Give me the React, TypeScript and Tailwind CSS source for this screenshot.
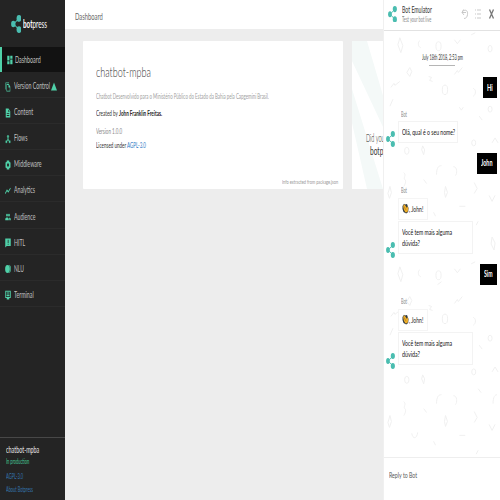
import { useLayoutEffect, useRef, useState } from "react";
import type { ReactNode } from "react";

/* Text condensed (or widened) horizontally to a fixed advance width. */
function Fit({ w, className = "", children }: { w: number; className?: string; children: ReactNode }) {
  const ref = useRef<HTMLSpanElement>(null);
  const [scale, setScale] = useState(1);
  useLayoutEffect(() => {
    if (ref.current) setScale(w / ref.current.offsetWidth);
  }, [w]);
  return (
    <span className="flex shrink-0 whitespace-nowrap" style={{ width: w }}>
      <span ref={ref} className={`block shrink-0 origin-left ${className}`} style={{ transform: `scaleX(${scale})` }}>
        {children}
      </span>
    </span>
  );
}

function Logo({ className }: { className: string }) {
  return (
    <svg className={className} viewBox="0 0 10 18" preserveAspectRatio="none">
      <path d="M7.5 3.5 2.5 9 7.5 14.5" fill="none" stroke="#4abdb0" strokeWidth="1" />
      <ellipse cx="7.6" cy="3.4" rx="2.3" ry="3.4" fill="#4abdb0" />
      <ellipse cx="2.2" cy="9" rx="2.100" ry="3.300" fill="#4abdb0" />
      <ellipse cx="7.6" cy="14.6" rx="2.3" ry="3.4" fill="#4abdb0" />
    </svg>
  );
}

const icons: Record<string, ReactNode> = {
  dashboard: <path d="M1 2h9V13H1zM1 22h9v-7H1zM13 22h9V11h-9zM13 2v7h9V2z" />,
  copy: <path d="M16 1H2v17h2V3h12zM15 5H6v18h15V11zM8 21V7h6v6h5v8z" />,
  content: <path d="M14 1H3v22h18V8zM17 19H7v-2h10zM17 14H7v-2h10zM13 9V3.500L18.500 9z" />,
  flows: <path d="M17 16l-4-4V8.800a3 3 0 1 0-2 0V12l-4 4H3v5h5v-3l4-4.200 4 4.200v3h5v-5z" stroke="currentColor" />,
  middleware: <path fillRule="evenodd" d="M7 1h10v3l5 2v12l-5 2v3H7v-3l-5-2V6l5-2zM12 8a4 4 0 1 0 0 8 4 4 0 0 0 0-8z" />,
  analytics: <path d="M1 18l7-8 5 4 9-9" fill="none" stroke="currentColor" strokeWidth="3" />,
  audience: <path d="M8 11a3.500 3.500 0 1 0 0-7 3.500 3.500 0 0 0 0 7zM16 11a3.500 3.500 0 1 0 0-7 3.500 3.500 0 0 0 0 7zM1 20v-3c0-5 14-5 14 0v3zM17 20v-3c0-1-.5-2-1.500-3 3-.5 7.500.5 7.500 3v3z" />,
  hitl: <path fillRule="evenodd" d="M1 1h22v18H7l-6 4zM11 4v8h3V4zM11 14v2h3v-2z" />,
  nlu: (
    <>
      <circle cx="10" cy="12" r="9.500" />
      <path d="M18 3c6 4 6 14 0 18" fill="none" stroke="currentColor" strokeWidth="2.500" />
    </>
  ),
  terminal: <path fillRule="evenodd" d="M1 2h22v17h-6v4H7v-4H1zM4 4v13h16V4zM6 6h12v2H6zM6 9h12v2H6zM6 12h12v3H6z" />,
};

const menu: { icon: string; label: string; w: number }[] = [
  { icon: "copy", label: "Version Control", w: 36 },
  { icon: "content", label: "Content", w: 19 },
  { icon: "flows", label: "Flows", w: 13.5 },
  { icon: "middleware", label: "Middleware", w: 27.5 },
  { icon: "analytics", label: "Analytics", w: 21 },
  { icon: "audience", label: "Audience", w: 21.5 },
  { icon: "hitl", label: "HITL", w: 11 },
  { icon: "nlu", label: "NLU", w: 10 },
  { icon: "terminal", label: "Terminal", w: 20 },
];

function MenuIcon({ name }: { name: string }) {
  return (
    <svg className="mt-px h-[10px] w-[6px] shrink-0 text-[#4fd0a8]" viewBox="0 0 24 24" preserveAspectRatio="none" fill="currentColor">
      {icons[name]}
    </svg>
  );
}

function Sidebar() {
  return (
    <aside className="flex w-[65px] shrink-0 flex-col bg-[#242424]">
      <div className="flex h-[47px] shrink-0 items-center gap-[2px] pl-[10.5px]">
        <Logo className="h-[18px] w-[10.5px] shrink-0" />
        <Fit w={24} className="text-[10.5px] leading-[12px] text-white">
          <b className="font-bold">bot</b>press
        </Fit>
      </div>
      <div className="flex h-[25px] shrink-0 items-center gap-[2.5px] border-l-2 border-[#4fd0a8] bg-[#121212] pl-[4.5px]">
        <MenuIcon name="dashboard" />
        <Fit w={26} className="text-[8.5px] leading-[10px] text-[#c4c4c4]">Dashboard</Fit>
      </div>
      {menu.map((m) => (
        <div key={m.label} className="flex h-[26.1px] shrink-0 items-center gap-[3px] border-b border-[#2b2b2b] pt-[3px] pl-[5px]">
          <MenuIcon name={m.icon} />
          <Fit w={m.w} className="text-[8.5px] leading-[10px] text-[#c0c0c0]">{m.label}</Fit>
          {m.icon === "copy" && (
            <svg className="-ml-[2px] h-[9px] w-[6px]" viewBox="0 0 6 9">
              <path d="M3 .5 6 8.500H0z" fill="#4fd0a8" />
            </svg>
          )}
        </div>
      ))}
      <div className="mt-auto flex h-[63px] shrink-0 flex-col border-t border-[#484848] pt-[7px] pl-[6px]">
        <Fit w={33} className="text-[8.5px] leading-[11px] text-[#e4e4e4]">chatbot-mpba</Fit>
        <Fit w={23} className="text-[7px] leading-[11px] text-[#45c898]">In production</Fit>
        <Fit w={17} className="mt-[4px] text-[7px] leading-[11px] text-[#3577b2]">AGPL-3.0</Fit>
        <Fit w={27} className="mt-[2px] text-[7px] leading-[11px] text-[#3577b2]">About Botpress</Fit>
      </div>
    </aside>
  );
}

function Main() {
  return (
    <main className="flex w-[318px] shrink-0 flex-col overflow-hidden bg-[#ededed]">
      <header className="flex h-[29px] shrink-0 items-center bg-white pt-[2px] pl-[10px]">
        <Fit w={28} className="text-[10px] leading-[12px] text-[#666]">Dashboard</Fit>
      </header>
      <div className="flex gap-[9px] pt-[12px] pl-[18px]">
        <section className="flex h-[148px] w-[259.5px] shrink-0 flex-col rounded-[1px] bg-white pt-[22px] pl-[13px]">
          <Fit w={55} className="text-[14.5px] leading-[18px] font-light text-[#333]">chatbot-mpba</Fit>
          <div className="mt-[11px]">
            <Fit w={173} className="text-[7.5px] leading-[10px] text-[#a0a0a0]">
              Chatbot Desenvolvido para o Ministério Público do Estado da Bahia pela Capgemini Brasil.
            </Fit>
          </div>
          <div className="mt-[7px]">
            <Fit w={66} className="text-[7.5px] leading-[10px] text-[#333]">
              Created by <b className="font-bold text-[#222]">John Franklin Freitas.</b>
            </Fit>
          </div>
          <div className="mt-[8px]">
            <Fit w={26} className="text-[7.5px] leading-[10px] text-[#888]">Version 1.0.0</Fit>
          </div>
          <div className="mt-[4px]">
            <Fit w={50} className="text-[7.5px] leading-[10px] text-[#333]">
              Licensed under <span className="text-[#2a77c4]">AGPL-3.0</span>
            </Fit>
          </div>
          <div className="mt-auto mr-[5px] mb-[3px] self-end">
            <Fit w={56} className="text-[6.5px] leading-[9px] text-[#999]">Info extracted from package.json</Fit>
          </div>
        </section>
        <section className="relative flex h-[148px] w-[160px] shrink-0 flex-col bg-white pt-[90px] pl-[14px]">
          <svg className="absolute inset-0 h-full w-[40px]" viewBox="0 0 40 148">
            <path d="M0 0h15L40 85v20L0 20zM0 48 31 148H15L0 82z" fill="#f4f9f8" />
          </svg>
          <div className="relative">
            <Fit w={33} className="text-[11px] leading-[13px] font-light text-[#222]">Did you know</Fit>
            <div className="pl-[4px]">
              <Fit w={25} className="text-[11px] leading-[13px] text-[#333]">botpress</Fit>
            </div>
          </div>
        </section>
      </div>
    </main>
  );
}

function Doodles() {
  const tile = (
    <>
      <path d="M16 5l3 8-2 7-3-8zM26 35l2 4-2 5-3-4zM39 114l2 4-1 5-2-5zM6 155l1.500 6-2 6-1.500-5zM62 155l2 6-2 5-1-5zM109 206l3 6-1 7-3-6z" />
      <path d="M36 8c-2 1-2 6 1 7M90 56c3 1 3 6 0 8M53 143c0-7 2-9 5-9M70 135c4 0 4 7 2 9M110 143c0-7 2-9 4-9M28 173c1 6 5 6 6-1M20 141c3 3-1 5 1 7s0 5-1 7M91 151l3 6-3 5" />
      <ellipse cx="55" cy="13.5" rx="2.6" ry="4.5" />
      <ellipse cx="61.5" cy="57.5" rx="2.7" ry="4.8" />
      <ellipse cx="107" cy="16" rx="2" ry="3.3" />
      <ellipse cx="107" cy="77" rx="2" ry="3" />
      <ellipse cx="23" cy="119" rx="2.2" ry="3.5" />
      <ellipse cx="90.5" cy="111" rx="2" ry="3" />
      <path d="M71 7l3 4 3-4M76 75l2 3 2-3M109 111l3-5 3 5M106 164l3 6 3-6M88 2l4-2M45 44l3 1-2 3 3 1M71 42l3-4 1 2 4-5M7 55l3-4 1 2 5-4M6 74l3-7M96 84l3 4M95 128l3 4M40 148l3 4M76 175h6M50 181l2 4M93 194l2-4M54 23l4-3" />
    </>
  );
  return (
    <svg className="absolute inset-0 h-full w-full" viewBox="0 0 117 426" fill="none" stroke="#f0f0f0" strokeWidth="1">
      <g>{tile}</g>
      <g transform="translate(0 231)">{tile}</g>
    </svg>
  );
}

function Wave() {
  return (
    <svg className="h-[11px] w-[7px] shrink-0" viewBox="0 0 7 11">
      <path d="M.5 3 2 .8 3 1.500 5 1l1.500 4-.3 4-2 1.500L1.500 9 .5 6z" fill="#2f3a42" />
      <path d="M1 3 2.500 1.200 5 5l.3-2.500L6.300 6 5.500 9 3.500 9.500 2 7z" fill="#f0ae28" />
      <path d="M1.500 3l2.500 4" stroke="#8c6a20" strokeWidth=".5" fill="none" />
    </svg>
  );
}

function Avatar() {
  return (
    <div className="w-[14px] shrink-0 pl-[2px]">
      <Logo className="relative top-[4px] h-[16px] w-[9px]" />
    </div>
  );
}

function Conversation() {
  return (
    <div className="mt-[12px] flex flex-col">
      <div className="pl-[17px]">
        <Fit w={6} className="text-[7px] leading-[9px] text-[#888]">Bot</Fit>
      </div>
      <div className="mt-[3px] ml-[14px] flex h-[22px] w-[30px] items-center gap-[0.5px] border border-[#f5f5f5] bg-white pl-[2.5px]">
        <Wave />
        <Fit w={14} className="text-[8px] leading-[10px] text-[#222]">, John!</Fit>
      </div>
      <div className="mt-[1.5px] flex items-end">
        <Avatar />
        <div className="h-[33px] w-[75px] border border-[#f3f3f3] bg-white pt-[5px] pl-[2.5px]">
          <Fit w={50} className="text-[8px] leading-[11px] text-[#111]">Você tem mais alguma</Fit>
          <Fit w={18} className="text-[8px] leading-[11px] text-[#111]">dúvida?</Fit>
        </div>
      </div>
    </div>
  );
}

function Reply({ w, tw, children }: { w: number; tw: number; children: string }) {
  return (
    <div className="mr-[3.5px] flex h-[21px] items-center justify-center self-end bg-black" style={{ width: w }}>
      <Fit w={tw} className="text-[8.5px] leading-[10px] font-bold text-white">{children}</Fit>
    </div>
  );
}

function Emulator() {
  return (
    <aside className="flex w-[117px] shrink-0 flex-col border-l border-[#f0f0f0] bg-white">
      <header className="flex h-[31px] shrink-0 items-center border-b border-[#e2e2e2] pt-[2px] pb-[4px] pl-[4px]">
        <Logo className="h-[16.5px] w-[9px] shrink-0" />
        <div className="ml-[4.5px]">
          <Fit w={30} className="text-[9px] leading-[10px] text-[#333]">Bot Emulator</Fit>
          <Fit w={29} className="text-[7px] leading-[8px] text-[#888]">Test your bot live</Fit>
        </div>
        <svg className="ml-[29px] h-[12px] w-[36px] shrink-0" viewBox="0 0 36 12" fill="none">
          <path d="M1 4.500h4M1 4.500l1.500-3M1 4.500l2 2.500M2 3c3-2 5 0 4.500 3.500C6.300 9 5 10.500 3 10.500" stroke="#bbb" strokeWidth=".8" />
          <path d="M14 2h1M16 2h4M14 6h1M16 6h4M14 10h1M16 10h4" stroke="#bbb" strokeWidth=".8" />
          <path d="M28.500 1.500l4 9M32.500 1.500l-4 9" stroke="#777" strokeWidth="1.300" />
        </svg>
      </header>
      <div className="relative h-[426px] shrink-0">
        <Doodles />
        <div className="relative flex flex-col">
          <div className="mt-[22px] self-center">
            <Fit w={41} className="text-[7px] leading-[9px] text-[#333]">July 18th 2018, 2:53 pm</Fit>
          </div>
          <div className="mt-[3px] h-px w-[26px] self-center bg-[#b5b5b5]" />
          <div className="mt-[11px] flex flex-col">
            <Reply w={14} tw={6}>Hi</Reply>
          </div>
          <div className="mt-[12px] pl-[17px]">
            <Fit w={6} className="text-[7px] leading-[9px] text-[#888]">Bot</Fit>
          </div>
          <div className="mt-[2px] flex items-end">
            <Avatar />
            <div className="flex h-[22px] w-[60px] items-center border border-[#f3f3f3] bg-white pl-[2.5px]">
              <Fit w={53} className="text-[8px] leading-[10px] text-[#111]">Olá, qual é o seu nome?</Fit>
            </div>
          </div>
          <div className="mt-[9.5px] flex flex-col">
            <Reply w={19.5} tw={11.5}>John</Reply>
          </div>
          <Conversation />
          <div className="mt-[9.5px] flex flex-col">
            <Reply w={16.5} tw={8.5}>Sim</Reply>
          </div>
          <Conversation />
        </div>
      </div>
      <footer className="flex grow items-start border-t border-[#eee] pt-[12px] pl-[4.5px]">
        <Fit w={28} className="text-[8px] leading-[11px] text-[#555]">Reply to Bot</Fit>
      </footer>
    </aside>
  );
}

export default function App() {
  return (
    <div className="flex h-[500px] w-[500px] overflow-hidden font-['Lato','Noto_Sans',sans-serif]">
      <Sidebar />
      <Main />
      <Emulator />
    </div>
  );
}
